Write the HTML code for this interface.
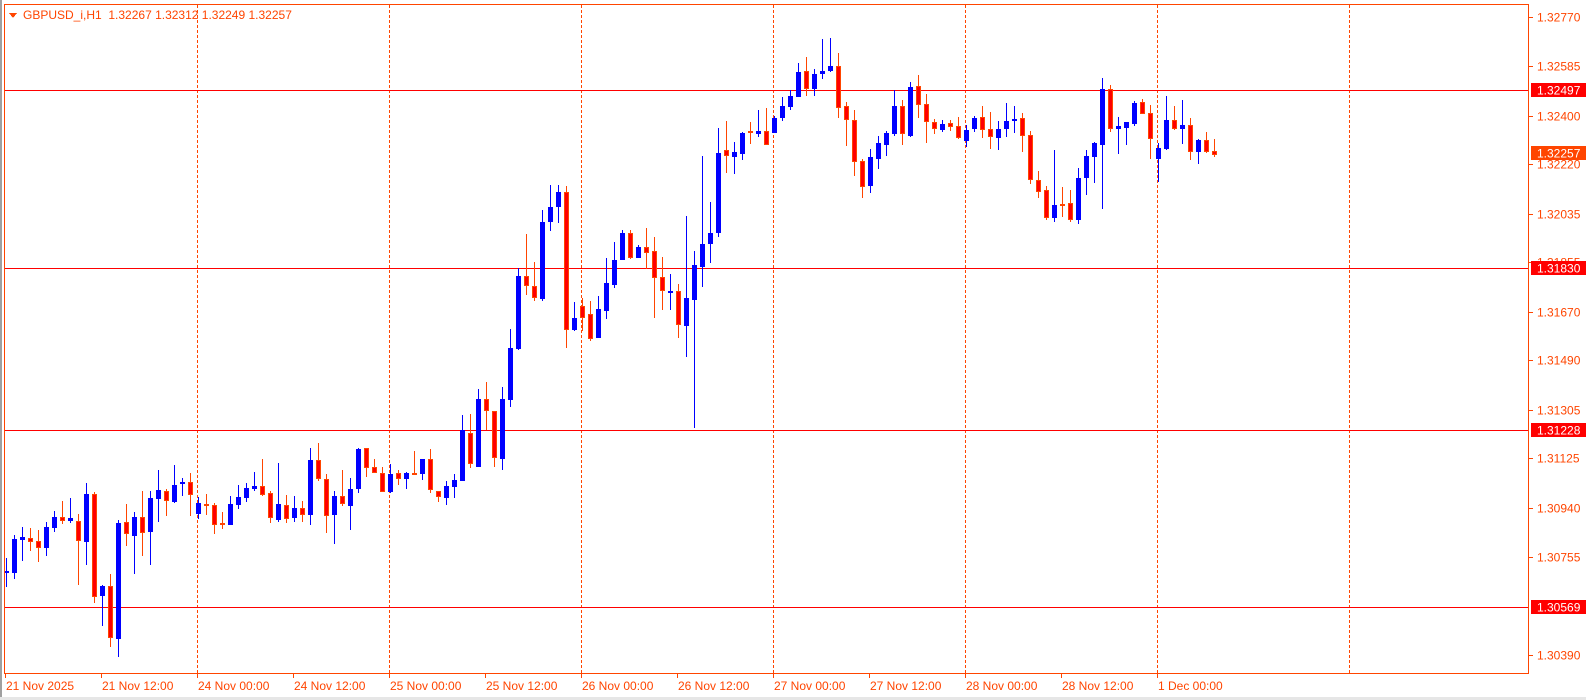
<!DOCTYPE html>
<html><head><meta charset="utf-8"><style>
html,body{margin:0;padding:0;background:#fff;width:1586px;height:700px;overflow:hidden}
svg{display:block}
text{font-family:"Liberation Sans",sans-serif;font-size:12px}
</style></head><body>
<svg id="s" width="1586" height="700" viewBox="0 0 1586 700" xmlns="http://www.w3.org/2000/svg" shape-rendering="crispEdges">
<rect x="0" y="0" width="1586" height="700" fill="#fff"/>
<rect x="0" y="0" width="2" height="697" fill="#a0a0a0"/>
<rect x="0" y="697" width="1586" height="3" fill="#e6e6e6"/>
<g id="grid" stroke="#ff4500" stroke-width="1" stroke-dasharray="3,2"></g>
<g id="hl" stroke="#ff0000" stroke-width="1"></g>
<g id="candles"></g>
<rect x="4.5" y="4.5" width="1524" height="669" fill="none" stroke="#ff4500" stroke-width="1"/>
<g id="axis" fill="#ff4500"></g>
<polygon points="9,13 17,13 13,18" fill="#ff4500"/>
<text x="23" y="19" fill="#ff4500" xml:space="preserve" style="white-space:pre">GBPUSD_i,H1  1.32267 1.32312 1.32249 1.32257</text>
</svg>
<script>
var NS="http://www.w3.org/2000/svg";
function el(p,t,a,txt){var e=document.createElementNS(NS,t);for(var k in a)e.setAttribute(k,a[k]);if(txt!=null)e.textContent=txt;document.getElementById(p).appendChild(e);return e;}
[197.5,389.5,581.5,773.5,965.5,1157.5,1349.5].forEach(function(x){el('grid','line',{x1:x,y1:5,x2:x,y2:673});});
[90.5,268.5,430.5,607.5].forEach(function(y){el('hl','line',{x1:5,y1:y,x2:1528,y2:y});});
var A=[
['b',603,607,565,650],['b',508,608,495,626],['b',501,509,471,572],['r',505,515,474,542],['r',514,533,480,575],
['b',471,533,457,557],['b',441,473,423,486],['r',441,452,393,461],['b',445,452,384,460],['r',454,512,432,644],
['b',372,515,339,584],['r',372,680,366,698],['b',648,677,645,767],['r',649,805,612,830],['b',459,806,449,860],
['r',457,491,402,527],['b',441,497,426,611],['r',441,488,363,557],['b',384,486,363,584],['b',360,386,300,455],
['r',364,392,357,437],['b',346,396,285,398],['b',337,341,324,377],['r',337,374,309,437],['b',400,431,380,446],
['r',403,409,372,434],['r',406,464,399,491],['r',460,464,426,476],['b',403,464,378,464],['b',382,404,345,416],
['b',354,383,339,395],['b',349,356,306,362],['r',349,374,267,377],['r',370,443,363,458],['b',403,449,279,455],
['r',406,446,375,458],['b',415,443,378,455],['r',415,434,393,455],['b',270,434,234,464],['r',271,326,218,332],
['r',328,437,312,488],['b',379,434,362,523],['r',379,401,300,409],['b',358,407,324,479],['b',238,356,234,368],
['r',235,293,234,320],['r',292,310,267,310],['r',310,365,291,365],['b',313,365,281,370],['r',310,326,299,344],
['b',310,326,306,356],['r',309,312,242,315],['b',268,311,268,329],['r',268,361,237,370],['r',364,380,362,395],
['b',349,383,333,404],['b',331,350,312,383]];
var D=A.map(function(c){return [c[0],370+c[1]/3,370+c[2]/3,370+c[3]/3,370+c[4]/3];});
D=D.concat([
['b',430,481,415,481],['r',433,464,414,468],['b',399,467,389,467],['r',399,411,382,430],['r',411,458,411,467],
['b',399,459,387,470],['b',348,400,329,407],['b',276,349,268,350],['r',276,286,234,295],['r',286,298,262,301],
['b',222,299,210,301],['b',207,222,185,231],['b',192,207,185,223],['r',192,330,186,348],['b',318,330,302,331],
['r',306,318,298,331],['r',314,339,301,341],['b',309,338,296,338],['b',283,311,258,319],['b',260,285,242,288],
['b',233,260,230,260],['r',233,258,230,259],['b',247,258,245,258],['r',247,253,228,269],['r',251,278,237,318],
['r',277,291,257,310],['b',291,292,274,310],['r',291,325,284,338],['b',298,326,216,357],['b',265,300,251,428],
['b',244,267,156,287],['b',233,244,202,263],['b',153,233,128,237],['r',150,156,121,173],['b',152,157,142,174],
['b',133,154,132,160],['r',131,132,122,144],['b',131,134,110,137],['r',131,145,108,145],['b',118,133,116,133],
['b',106,118,97,121],['b',96,107,90,110],['b',72,97,63,97],['r',71,89,57,96],['b',74,89,69,96],
['b',71,74,39,79],['b',66,71,38,72],['r',66,108,53,118],['r',106,120,102,146],['r',120,162,110,176],
['r',161,187,159,198],['b',157,186,149,193],['b',143,159,136,169],['b',133,145,131,156],['b',106,134,90,136],
['r',106,134,100,145],['b',87,136,82,137],['r',86,105,75,118],['r',104,122,94,143],['r',122,129,119,134],
['b',124,130,120,132],['r',123,127,120,131],['r',126,138,117,139],['b',130,141,125,147],['b',118,129,116,132],
['r',117,130,106,138],['r',129,137,112,149],['b',129,138,121,150],['b',121,129,103,137],['b',119,121,106,133],
['r',118,136,113,152],['r',135,180,131,184],['r',180,192,171,198],['r',190,218,186,220],['b',205,218,150,222],
['r',204,205,187,217],['r',203,220,190,222],['b',178,220,168,224],['b',156,178,150,195],['b',143,157,142,183],
['b',89,145,78,209],['r',89,129,85,132],['b',126,129,117,154],['b',122,128,122,145],['b',103,124,101,126],
['r',102,114,99,114],['r',113,139,105,159],['b',148,159,143,182],['b',120,149,96,150],['r',120,129,106,130],
['b',125,129,100,144],['r',125,152,118,160],['b',140,152,139,164],['r',140,152,132,153],['r',151,155,139,157]]);
D.forEach(function(c,i){
  var x=Math.round(5.5+8*i);
  var bt=Math.round(c[1]),bb=Math.round(c[2]),wt=Math.round(c[3]),wb=Math.round(c[4]);
  if(bb-bt<2)bb=bt+2;
  var wc=c[0]=='b'?'#0000ff':'#ff4500';
  el('candles','rect',{x:x,y:wt,width:1,height:Math.max(1,wb-wt),fill:wc});
  if(c[0]=='b') el('candles','rect',{x:x-2,y:bt,width:5,height:bb-bt,fill:'#0000ff'});
  else el('candles','rect',{x:x-1.5,y:bt+0.5,width:4,height:bb-bt-1,fill:'#ff0000',stroke:'#ff4500','stroke-width':1});
});
function py(p){return 90+(1.32497-p)*26815;}
['1.32770','1.32585','1.32400','1.32220','1.32035','1.31855','1.31670','1.31490','1.31305','1.31125','1.30940','1.30755','1.30390'].forEach(function(p){
  var y=Math.round(py(parseFloat(p)));
  el('axis','rect',{x:1529,y:y,width:4,height:1});
  el('axis','text',{x:1537,y:y+4.5},p);
});
[['1.32497',90,'#ff0000'],['1.31830',268,'#ff0000'],['1.31228',430,'#ff0000'],['1.30569',607,'#ff0000'],['1.32257',153,'#ff4500']].forEach(function(b){
  el('axis','rect',{x:1531,y:b[1]-7,width:55,height:14,fill:b[2]});
  el('axis','text',{x:1537,y:b[1]+4.5,fill:'#fff'},b[0]);
});
var L=['21 Nov 2025','21 Nov 12:00','24 Nov 00:00','24 Nov 12:00','25 Nov 00:00','25 Nov 12:00','26 Nov 00:00','26 Nov 12:00','27 Nov 00:00','27 Nov 12:00','28 Nov 00:00','28 Nov 12:00','1 Dec 00:00'];
L.forEach(function(t,i){var x=Math.round(5.5+96*i)-1;
  el('axis','rect',{x:x,y:674,width:1,height:4});
  el('axis','text',{x:x+1,y:690},t);});
</script>
</body></html>
